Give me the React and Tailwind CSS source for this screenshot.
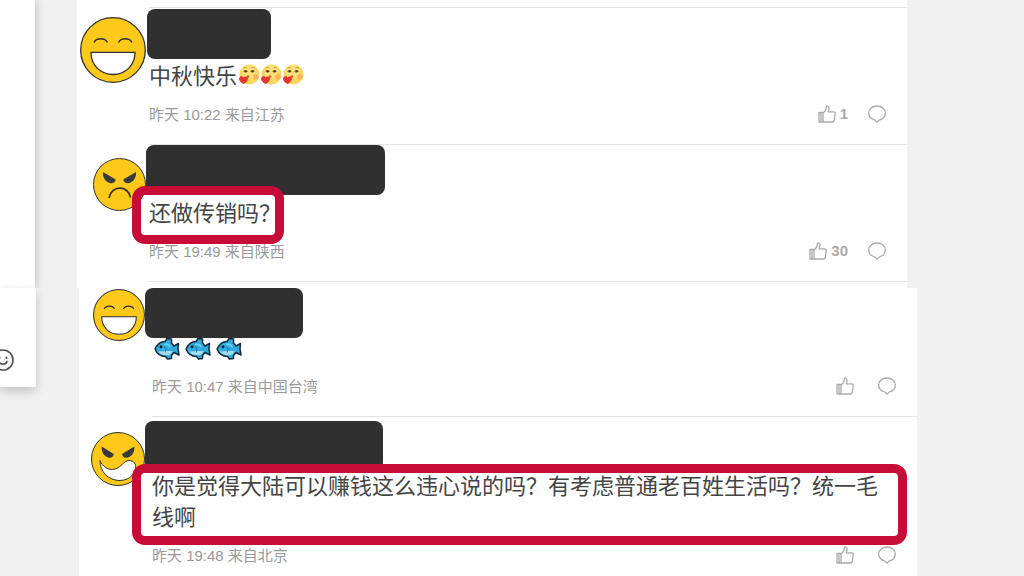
import React from "react";
import clsx from "clsx";

const LaughFace = ({ className }) => (
  <svg className={className} viewBox="0 0 66 66" fill="none" stroke="#2f2f2f" aria-hidden="true">
    <circle cx="33" cy="33" r="32.3" fill="#ffc91a" strokeWidth="1.3" />
    <path d="M14 25.5C16.500 20.500 25 20.500 27.500 25.500M38.500 25.500C41 20.500 49.500 20.500 52 25.500" strokeWidth="1.3" />
    <path d="M11 35.300H55C55 48 46 57.500 33 57.500S11 48 11 35.300z" fill="#fff" strokeWidth="1.3" />
  </svg>
);

const AngryFace = ({ className }) => (
  <svg className={className} viewBox="0 0 53 53" fill="none" stroke="#2f2f2f" aria-hidden="true">
    <circle cx="26.5" cy="26.5" r="26" fill="#ffc91a" />
    <path d="M10 14L22.800 21.500C22.500 24.500 19.500 26 16.500 25C12 23.500 9.500 19 10 14zM43 14L30.200 21.500C30.500 24.500 33.500 26 36.500 25C41 23.500 43.500 19 43 14z" fill="#3a3a3a" stroke="none" />
    <path d="M16 40C18 27 35.500 27 37.500 39.500" strokeWidth="1.7" />
  </svg>
);

const EvilFace = ({ className }) => (
  <svg className={className} viewBox="0 0 54 54" fill="none" stroke="#2f2f2f" aria-hidden="true">
    <circle cx="27" cy="27" r="26.5" fill="#ffc91a" />
    <path d="M10.700 14.500L22.800 22C22.500 25 20 26.500 17 25.500C12.500 24 10.200 19.500 10.700 14.500zM43.300 14.500L31 22C31.500 25 34 26.500 37 25.500C41.500 24 43.800 19.500 43.300 14.500z" fill="#3a3a3a" stroke="none" />
    <path d="M9 28.500C11 34 17 39 24 37C31 35 32 29 38 28.500C43 28.500 45.500 32 44.500 37C43 44.500 36 48.500 28 48.500C17 48 9 40 9 28.500z" fill="#fff" />
  </svg>
);

const KissEmoji = () => (
  <svg className="size-[22px]" viewBox="0 0 22 22" aria-hidden="true">
    <circle cx="11.500" cy="10.500" r="10" fill="#fbd75f" />
    <circle cx="11" cy="8" r="6.500" fill="#fee07c" />
    <circle cx="18" cy="13" r="2.800" fill="#f9a65a" opacity="0.700" />
    <path d="M5.500 4.300q2-1.500 3.500-.500M13.500 3.800q2-.800 3.500.500" stroke="#c08a2c" strokeWidth="0.800" fill="none" />
    <ellipse cx="7.500" cy="7.300" rx="1.900" ry="1.300" fill="#8a6a28" />
    <ellipse cx="14.500" cy="7.300" rx="1.900" ry="1.300" fill="#8a6a28" />
    <circle cx="7.800" cy="7.300" r="0.900" fill="#3f3015" />
    <circle cx="14.800" cy="7.300" r="0.900" fill="#3f3015" />
    <path d="M5.500 20C1 18 0 14 2.200 12.600c1.500-.700 2.600 0 3.300.900 1-1.200 3.500-1.300 4.300.300C10.600 16 8.500 18.800 5.500 20z" fill="#e5352d" />
    <circle cx="10" cy="12.500" r="1.300" fill="#d9542f" />
  </svg>
);

const FishEmoji = () => (
  <svg className="h-[23px] w-[26px]" viewBox="0 0 26 23" strokeLinejoin="round" aria-hidden="true">
    <path d="M1 12C3 7.500 7 4.500 11 4.500L13 1.500L17.500 2V6L20 9L24.500 6.500L24 11.500L25 18L20 15.500L17.500 18.500V21.500L13.500 22L11.500 19.500C7 19.500 3 17 1 12z" fill="#2fa9de" stroke="#142a38" strokeWidth="1.500" />
    <path d="M3.500 14C7 15.500 9 13.500 13 14H19L16 17.800C11 19 6.500 18 3.500 14z" fill="#a9dcf3" />
    <path d="M10 7.500Q14 6.500 16.500 10" stroke="#66d2f4" strokeWidth="2" fill="none" />
    <path d="M10.500 9.500Q13.500 12 11 15.500" stroke="#1578ad" fill="none" />
    <circle cx="7" cy="9.700" r="1.500" fill="#10222e" />
  </svg>
);

const ThumbIcon = () => (
  <svg className="size-[18px]" viewBox="0 0 18 18" fill="none" stroke="currentColor" strokeWidth="1.300" strokeLinejoin="round" aria-hidden="true">
    <path d="M1 7.500H5V17H1zM3 7.500V17" />
    <path d="M5 7.800C7.500 6.500 8.200 4.500 8.300 1.800C8.400.700 11 .600 11 2.800C11 4.500 10.700 5.500 10.300 6.800H15.500C16.700 6.800 17.300 7.500 17.200 8.500L16.200 15.500C16 16.500 15.500 17 14.500 17H5" />
  </svg>
);

const BubbleIcon = () => (
  <svg className="size-[18px]" viewBox="0 0 18 18" fill="none" stroke="currentColor" strokeWidth="1.300" strokeLinejoin="round" aria-hidden="true">
    <path d="M9 1C4.300 1 .700 4 .700 8C.700 11.500 3.300 14 6.800 15L9.200 17L11 15.100C14.700 14.200 17.300 11.500 17.300 8C17.300 4 13.700 1 9 1z" />
  </svg>
);

const SmileIcon = () => (
  <svg className="size-[22px]" viewBox="0 0 22 22" fill="none" stroke="#555" strokeWidth="1.700" strokeLinecap="round" aria-hidden="true">
    <circle cx="11" cy="11" r="10" />
    <path d="M7 12.500C8 16 14 16 15 12.500" />
    <path d="M7.500 8.500v.500M14.500 8.500v.500" strokeWidth="2" />
  </svg>
);

const earlier = [
  {
    Face: LaughFace,
    side: "pr-[3px]",
    face: "mt-[10px] size-[66px]",
    head: "h-[53px]",
    mask: "top-px -left-[2px] w-[124px]",
    text: "中秋快乐",
    Emoji: KissEmoji,
    meta: "昨天 10:22 来自江苏",
    likes: 1,
  },
  {
    Face: AngryFace,
    side: "pr-[3px]",
    face: "mt-[14px] size-[53px]",
    head: "h-[53px]",
    mask: "top-0 -left-[3px] w-[239px]",
    text: "还做传销吗？",
    mark: "-top-3 -bottom-[15px] -left-[17px] -right-[3px]",
    meta: "昨天 19:49 来自陕西",
    likes: 30,
  },
];

const later = [
  {
    Face: LaughFace,
    side: "pr-[7px]",
    face: "mt-px size-[52px]",
    head: "h-[45px]",
    mask: "top-0 -left-[7px] w-[158px]",
    Emoji: FishEmoji,
    emojiGap: "gap-[5px] pl-[2px]",
    meta: "昨天 10:47 来自中国台湾",
  },
  {
    Face: EvilFace,
    side: "pr-[7px]",
    face: "mt-4 size-[54px]",
    head: "h-[54px]",
    mask: "top-1 -left-[7px] w-[238px]",
    text: "你是觉得大陆可以赚钱这么违心说的吗？有考虑普通老百姓生活吗？统一毛线啊",
    mark: "-top-[7px] -bottom-3 -left-5 -right-[11px]",
    meta: "昨天 19:48 来自北京",
    last: true,
  },
];

function Comment({ item, divider }) {
  const { Face, Emoji } = item;

  return (
    <article className="flex">
      <div className={clsx("flex w-[72px] shrink-0 justify-end", item.side)}>
        <Face className={clsx("shrink-0", item.face)} />
      </div>

      <div
        className={clsx(
          "relative min-w-0 flex-1 pr-[21px]",
          divider && "border-t border-[#e4e4e4]",
          item.last ? "pb-1" : "pb-[17px]"
        )}
      >
        <div className={item.head} />
        <div className="relative w-fit">
          <p className="flex min-h-[31px] items-center text-[22px] leading-[31px] text-[#444]">
            {item.text}
            {Emoji && (
              <span className={clsx("flex", item.emojiGap || "pb-1 pl-px")}>
                <Emoji />
                <Emoji />
                <Emoji />
              </span>
            )}
          </p>
          {item.mark && (
            <span className={clsx("absolute z-20 rounded-[13px] border-[9px] border-[#c60c37]", item.mark)} />
          )}
        </div>

        {/* hidden user name */}
        <div className={clsx("absolute z-10 h-[50px] rounded-lg bg-[#303030]", item.mask)} />

        <div className="mt-[11px] flex h-6 items-center justify-between text-[15px] text-[#999]">
          <span>{item.meta}</span>
          <div className="flex items-center gap-5 pb-[2px] text-[#aaa]">
            <button aria-label="赞" className="flex items-center gap-1">
              <ThumbIcon />
              <span className="font-bold">{item.likes}</span>
            </button>
            <button aria-label="评论">
              <BubbleIcon />
            </button>
          </div>
        </div>
      </div>
    </article>
  );
}

export default function App() {
  return (
    <div className="flex min-h-screen flex-col overflow-hidden bg-[#f1f1f1] font-['Liberation_Sans','Noto_Sans_CJK_SC',sans-serif]">
      <section className="flex overflow-hidden">
        <aside className="w-[35px] shrink-0 bg-white shadow-[0_0_10px_rgba(0,0,0,0.25)]" />
        <main className="mr-[117px] ml-[42px] flex-1 bg-white pt-[7px]">
          {earlier.map((item) => (
            <Comment key={item.meta} item={item} divider />
          ))}
          <div className="mb-[6px] ml-[72px] border-t border-[#e4e4e4]" />
        </main>
      </section>

      <section className="flex flex-1">
        <aside className="flex h-[99px] w-9 shrink-0 items-end bg-white pb-4 shadow-[0_4px_10px_rgba(0,0,0,0.2)]">
          <button aria-label="表情" className="-ml-2">
            <SmileIcon />
          </button>
        </aside>
        <main className="mr-[107px] ml-[43px] flex-1 bg-white pl-px">
          {later.map((item, i) => (
            <Comment key={item.meta} item={item} divider={i > 0} />
          ))}
        </main>
      </section>
    </div>
  );
}
